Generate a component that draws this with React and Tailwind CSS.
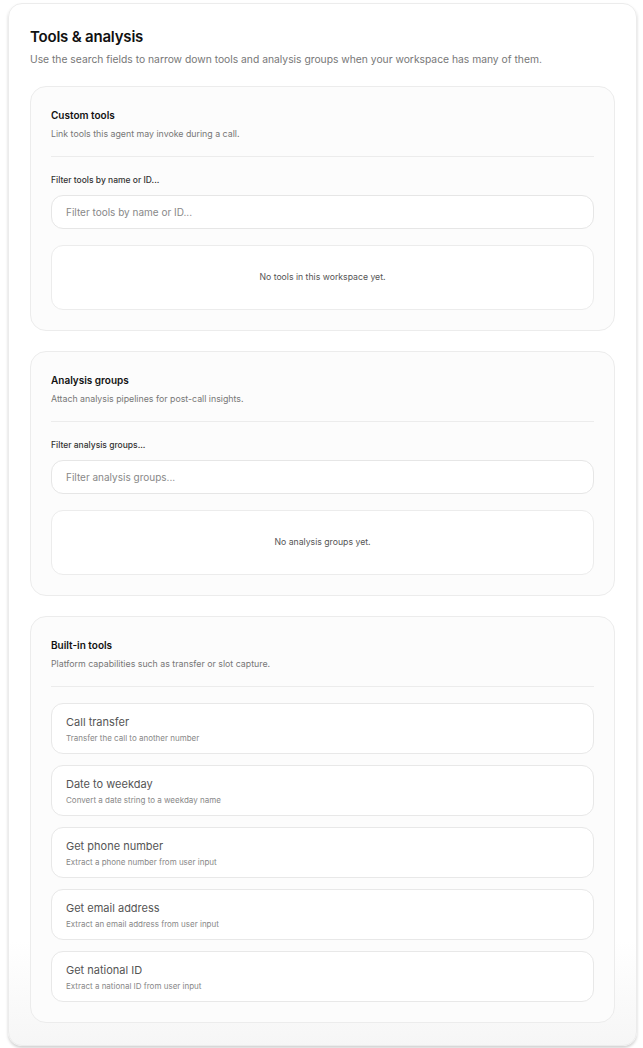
const BUILT_IN = [
  { name: 'Call transfer', desc: 'Transfer the call to another number' },
  { name: 'Date to weekday', desc: 'Convert a date string to a weekday name' },
  { name: 'Get phone number', desc: 'Extract a phone number from user input' },
  { name: 'Get email address', desc: 'Extract an email address from user input' },
  { name: 'Get national ID', desc: 'Extract a national ID from user input' },
];

function Section({ title, desc, children }) {
  return (
    <div className="rounded-2xl border border-[#ececec] bg-[#fcfcfc] px-5 pt-[21px] pb-5">
      <h3 className="text-[10px] leading-[14px] font-semibold text-[#111]">{title}</h3>
      <p className="mt-[5px] text-[8.8px] leading-[14px] text-[#777]">{desc}</p>
      <div className="mt-[15px] border-t border-[#ececec]" />
      {children}
    </div>
  );
}

function FilterBlock({ label, empty }) {
  return (
    <>
      <label className="mt-[16px] block text-[8.5px] leading-[14px] font-medium text-[#333]">{label}</label>
      <input
        type="text"
        placeholder={label}
        className="mt-2 block h-[34px] w-full rounded-xl border border-[#e6e6e6] bg-white px-[14px] text-[10px] text-[#333] placeholder:text-[#888] outline-none"
      />
      <div className="mt-[16px] flex h-[65px] items-center justify-center rounded-xl border border-[#ececec] bg-white text-[8.7px] text-[#555]">
        {empty}
      </div>
    </>
  );
}

export default function App() {
  return (
    <div className="min-h-screen bg-white pt-[3px] pl-2 pr-[6px] pb-1" style={{ fontFamily: 'Inter, "Noto Sans", sans-serif' }}>
      <div className="rounded-[14px] border border-[#ececec] bg-gradient-to-b from-white from-90% to-[#f6f6f6] pl-[21px] pr-[21px] pt-[22px] pb-[22px] shadow-[0_2px_3px_rgba(0,0,0,0.18)]">
        <h2 className="text-[15px] leading-[22px] font-semibold tracking-[-0.2px] text-[#111]">Tools &amp; analysis</h2>
        <p className="mt-[3px] text-[10.3px] leading-[16px] text-[#777]">
          Use the search fields to narrow down tools and analysis groups when your workspace has many of them.
        </p>

        <div className="mt-[19px] flex flex-col gap-5">
          <Section title="Custom tools" desc="Link tools this agent may invoke during a call.">
            <FilterBlock label="Filter tools by name or ID..." empty="No tools in this workspace yet." />
          </Section>

          <Section title="Analysis groups" desc="Attach analysis pipelines for post-call insights.">
            <FilterBlock label="Filter analysis groups..." empty="No analysis groups yet." />
          </Section>

          <Section title="Built-in tools" desc="Platform capabilities such as transfer or slot capture.">
            <div className="mt-[16px] flex flex-col gap-[11px]">
              {BUILT_IN.map((t) => (
                <div key={t.name} className="h-[51px] rounded-xl border border-[#e8e8e8] bg-white px-[14px] pt-[10px]">
                  <div className="text-[11px] leading-[16px] text-[#555]">{t.name}</div>
                  <div className="mt-[2px] text-[8px] leading-[12px] text-[#888]">{t.desc}</div>
                </div>
              ))}
            </div>
          </Section>
        </div>
      </div>
    </div>
  );
}
